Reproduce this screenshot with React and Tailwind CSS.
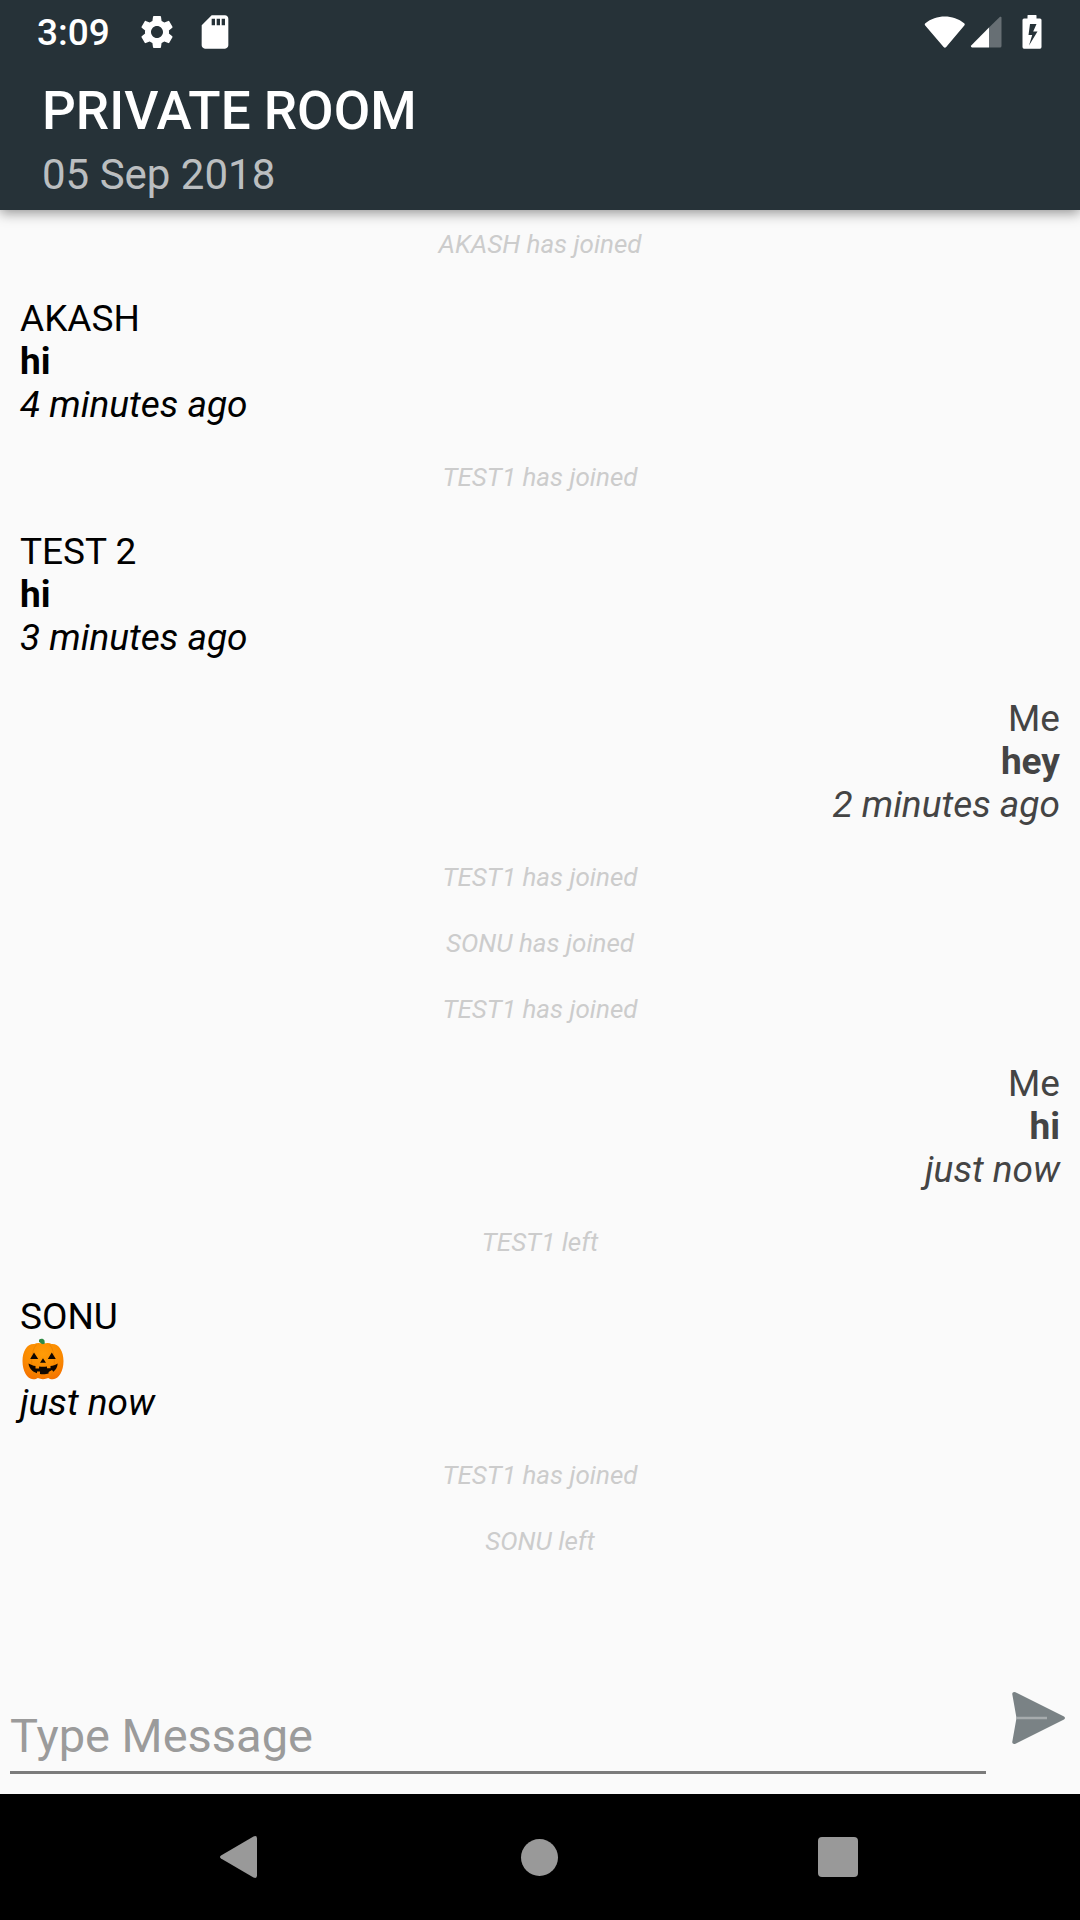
import React from "react";
import { MdSettings, MdSdCard } from "react-icons/md";

const entries = [
  { kind: "event", text: "AKASH has joined" },
  { kind: "message", name: "AKASH", body: "hi", time: "4 minutes ago" },
  { kind: "event", text: "TEST1 has joined" },
  { kind: "message", name: "TEST 2", body: "hi", time: "3 minutes ago" },
  { kind: "message", name: "Me", body: "hey", time: "2 minutes ago", mine: true },
  { kind: "event", text: "TEST1 has joined" },
  { kind: "event", text: "SONU has joined" },
  { kind: "event", text: "TEST1 has joined" },
  { kind: "message", name: "Me", body: "hi", time: "just now", mine: true },
  { kind: "event", text: "TEST1 left" },
  { kind: "message", name: "SONU", body: "pumpkin", time: "just now" },
  { kind: "event", text: "TEST1 has joined" },
  { kind: "event", text: "SONU left" },
];

function Pumpkin() {
  return (
    <svg role="img" aria-label="Jack-o-lantern" viewBox="0 0 43 43" className="ml-0.5 size-[43px]">
      <defs>
        <radialGradient id="pumpkin" cx="0.5" cy="0.3" r="0.7">
          <stop offset="0" stopColor="#ff9c07" />
          <stop offset="0.6" stopColor="#fb8c00" />
          <stop offset="1" stopColor="#f57400" />
        </radialGradient>
      </defs>
      <path d="M17 1.800C18.800.3 21.600.6 22.500 2.600L23 7.500h-4.200c.4-2-.1-3.100-1.800-3.600z" fill="#2e8b45" />
      <path
        d="M21 6.200c3.400-1.400 6-1.400 8.600-.2C36.800 5.400 41.500 13 41.500 23c0 10-4.500 18-10.600 18.300-1.900.1-3.400-.4-4.700-1.300-3 1.500-7.400 1.500-10.400 0-1.300.9-2.800 1.400-4.700 1.300C5 41 .5 33 .5 23c0-10 4.700-17.600 11.900-17C15 4.800 17.600 4.800 21 6.200z"
        fill="url(#pumpkin)"
      />
      <path
        d="M14.500 6.500c-6 6-6.800 25-.5 33M27.500 6.500c6 6 6.800 25 .5 33"
        fill="none"
        stroke="#e88000"
        strokeWidth="0.8"
      />
      <path d="M12 14.500l4.200 6.500H8.200zM29.800 14.500l4 6.500h-8zM21 20.200l3 4.600h-6z" fill="#100700" />
      <path
        d="M6.500 25.500c2 1.200 4.500 2.200 7 2.600v2.400h3.600v-2c2.700.3 5.200.3 7.900 0v1.800h3.500v-2.200c2.500-.4 5-1.300 7.200-2.600-.3 3.500-1.700 6.200-4.300 8.200l-1.400-1.600-3.400 1.800v1.500c-1.500.5-3.200.8-5.600.8-1 0-2-.1-3-.2v-2.400h-3v1.700C10.300 33.600 7 30.200 6.500 25.500z"
        fill="#100700"
      />
    </svg>
  );
}

function Event({ text }) {
  return (
    <li className="pt-[17px] pb-[19px] text-center text-[26px] leading-[30px] italic text-[#cccccc]">{text}</li>
  );
}

function Message({ name, body, time, mine }) {
  return (
    <li
      className={`px-5 py-[19px] text-[37px] leading-[43px] ${mine ? "text-right text-[#444444]" : "text-black"}`}
    >
      <p>{name}</p>
      {body === "pumpkin" ? <Pumpkin /> : <p className="font-bold">{body}</p>}
      <p className="italic">{time}</p>
    </li>
  );
}

function StatusBar() {
  return (
    <div className="flex h-16 items-center pl-[37px] pr-[38px]">
      <span className="text-[37px] leading-[43px] font-medium">3:09</span>
      <MdSettings className="ml-[27px] size-10" />
      <MdSdCard className="ml-[18px] size-10" />
      <svg viewBox="0 0 42 33" className="ml-auto h-[33px] w-[42px]" fill="currentColor">
        <path d="M1.400 7.200C12-1.900 29.500-1.900 40.100 7.200q1.200 1 .2 2.300L22.200 31q-1.300 1.400-2.600 0L1.200 9.500Q.2 8.200 1.400 7.200z" />
      </svg>
      <svg viewBox="0 0 32 32" className="ml-1 size-8" fill="currentColor">
        <path opacity="0.3" d="M30 .8q1.500-.6 1.500 1V30q0 1.500-1.500 1.500H19V11.500z" />
        <path d="M19 11.500v20H2Q.200 31 1.200 29.500z" />
      </svg>
      <svg viewBox="0 0 20 34" className="ml-5 h-[34px] w-5" fill="currentColor">
        <path
          fillRule="evenodd"
          d="M6 0h8q.5 0 .5.500V3.500H18q1.500 0 1.500 1.500V32q0 1.700-1.500 1.700H2Q.5 33.700.5 32V5Q.5 3.500 2 3.500H5.500V.5Q5.500 0 6 0zM8 9l-1.500 11h3.700L7 30.500 15.500 16.500h-4.300L14.500 9z"
        />
      </svg>
    </div>
  );
}

export default function App() {
  return (
    <div className="flex min-h-screen flex-col bg-[#fafafa] font-[Roboto,sans-serif]">
      <header className="z-10 h-[210px] bg-[#263238] text-white shadow-[0_3px_12px_rgba(0,0,0,0.42)]">
        <StatusBar />
        <div className="px-[42px] pt-4">
          <h1 className="text-[53px] leading-[62px] font-medium">PRIVATE ROOM</h1>
          <p className="pt-2 text-[42px] leading-[50px] text-white/70">05 Sep 2018</p>
        </div>
      </header>

      <main className="flex grow flex-col">
        <ul className="grow pt-0.5">
          {entries.map((entry, index) =>
            entry.kind === "event" ? <Event key={index} {...entry} /> : <Message key={index} {...entry} />
          )}
        </ul>
        <form className="flex items-end pb-5 pl-2.5" onSubmit={(event) => event.preventDefault()}>
          <input
            type="text"
            aria-label="Type Message"
            placeholder="Type Message"
            className="h-[72px] min-w-0 grow border-b-[3px] border-[#7b7b7b] bg-transparent pb-0.5 text-[47px] leading-[56px] outline-none placeholder:text-[#9b9b9b]"
          />
          <button type="submit" aria-label="Send" className="mb-7 ml-6 mr-3.5 flex h-14 w-14 items-center justify-center">
            <svg viewBox="0 0 56 56" className="size-14">
              <path
                d="M5.500 2.300L54 26.500q2 1.500 0 3L5.500 53.700q-3 .8-3.300-1.500L6.500 28 2.200 3.800Q2.500 1.500 5.500 2.300z"
                fill="#7a8285"
              />
              <path d="M6.500 28H37" stroke="#a6abad" strokeWidth="2.500" />
            </svg>
          </button>
        </form>
      </main>

      <nav className="flex h-[126px] items-center justify-between bg-black pl-[218px] pr-[222px] text-[#999999]">
        <button type="button" aria-label="Back" className="flex size-[42px] items-center">
          <svg viewBox="0 0 42 42" className="size-[42px]" fill="currentColor">
            <path d="M35.500.500Q39 -1 39 2.500V39.500Q39 43 35.500 41.500L3 22.500Q1 21 3 19.500z" />
          </svg>
        </button>
        <button type="button" aria-label="Home" className="size-[37px] rounded-full bg-current" />
        <button type="button" aria-label="Recent apps" className="size-10 rounded-sm bg-current" />
      </nav>
    </div>
  );
}
